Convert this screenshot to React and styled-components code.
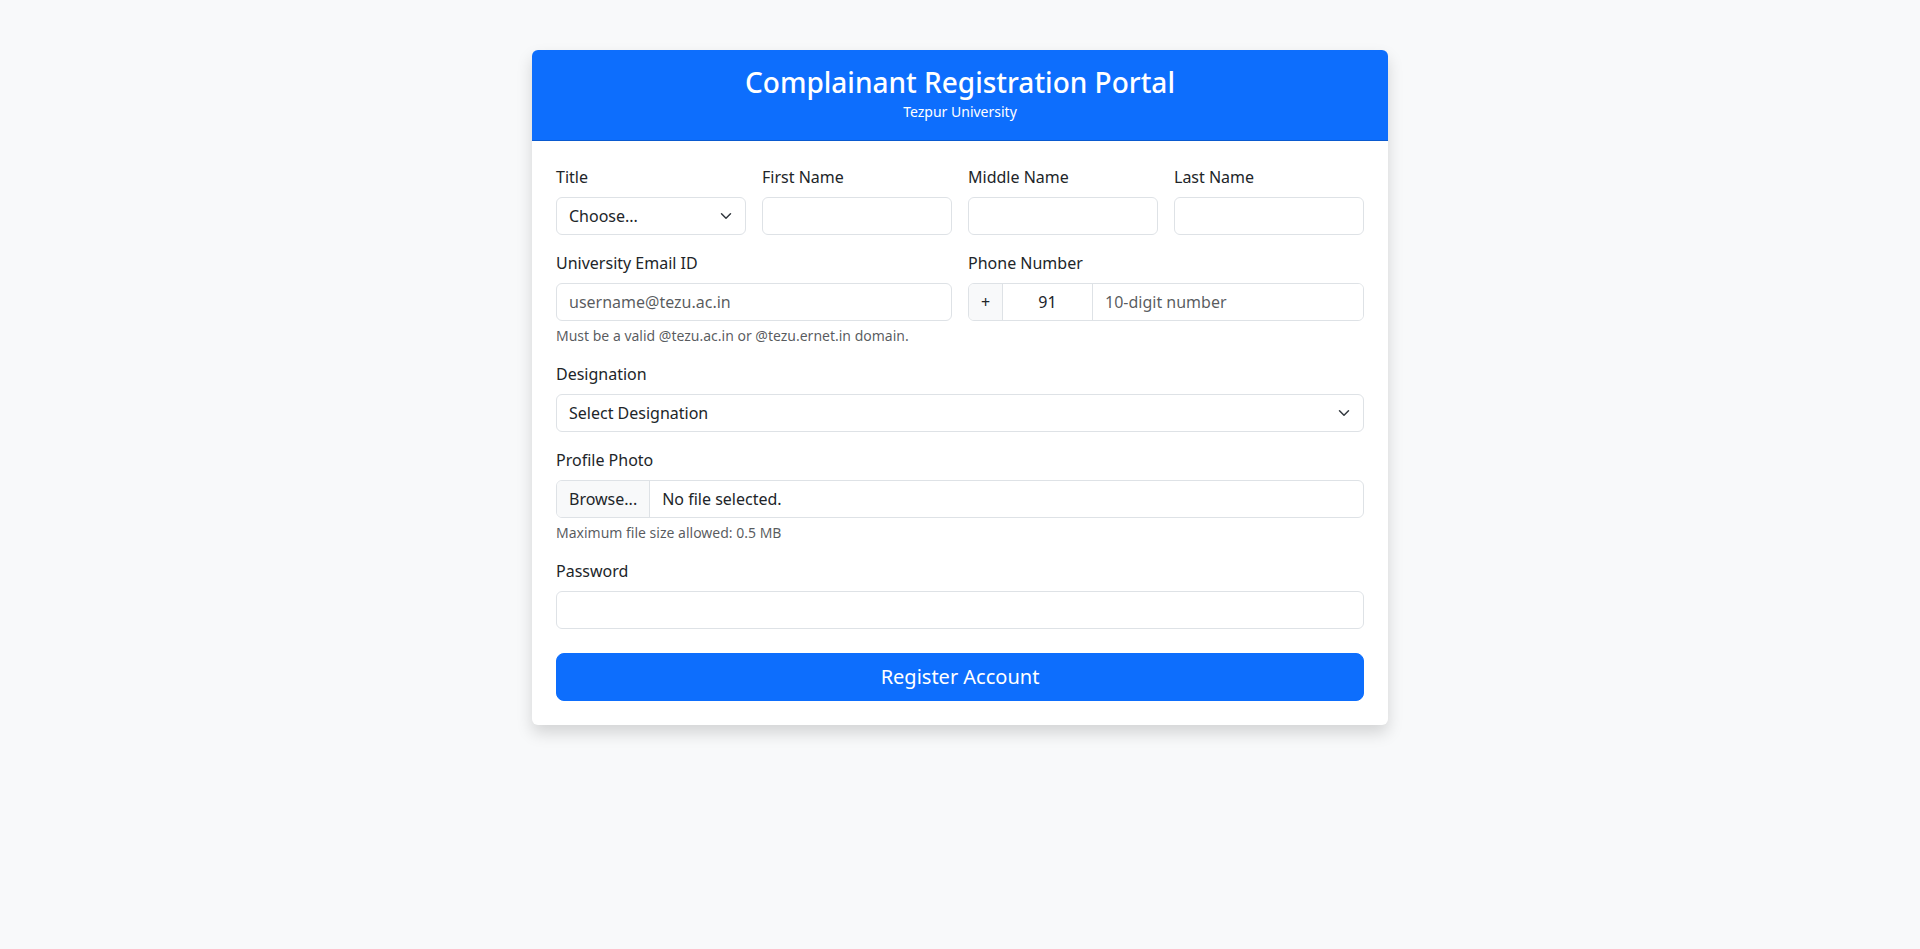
import React from 'react'
import styled, { createGlobalStyle } from 'styled-components'

const GlobalStyle = createGlobalStyle`
    *, *::before, *::after {
        box-sizing: border-box;
    }
    body {
        margin: 0;
        background-color: #f8f9fa;
        color: #212529;
        font-family: "Noto Sans", "Open Sans", sans-serif;
        font-size: 16px;
        line-height: 1.5;
    }
`

const Chevron = () => (
    <svg width="12" height="12" viewBox="0 0 16 16" fill="none">
        <path d="m2 5 6 6 6-6" stroke="#343a40" strokeWidth="2" strokeLinecap="round" strokeLinejoin="round" />
    </svg>
)

export default function App() {
    return (
        <Page>
            <GlobalStyle />
            <Card>
                <CardHeader>
                    <Title>Complainant Registration Portal</Title>
                    <Subtitle>Tezpur University</Subtitle>
                </CardHeader>
                <CardBody>
                    <Row $cols={4}>
                        <Field>
                            <Label>Title</Label>
                            <SelectWrap>
                                <Select defaultValue="">
                                    <option value="">Choose...</option>
                                    <option>Mr.</option>
                                    <option>Ms.</option>
                                    <option>Dr.</option>
                                    <option>Prof.</option>
                                </Select>
                                <Arrow><Chevron /></Arrow>
                            </SelectWrap>
                        </Field>
                        <Field>
                            <Label>First Name</Label>
                            <Input type="text" />
                        </Field>
                        <Field>
                            <Label>Middle Name</Label>
                            <Input type="text" />
                        </Field>
                        <Field>
                            <Label>Last Name</Label>
                            <Input type="text" />
                        </Field>
                    </Row>

                    <Row $cols={2}>
                        <Field>
                            <Label>University Email ID</Label>
                            <Input type="email" placeholder="username@tezu.ac.in" />
                            <Help>Must be a valid @tezu.ac.in or @tezu.ernet.in domain.</Help>
                        </Field>
                        <Field>
                            <Label>Phone Number</Label>
                            <InputGroup>
                                <Addon>+</Addon>
                                <CodeInput type="text" defaultValue="91" />
                                <GroupInput type="tel" placeholder="10-digit number" />
                            </InputGroup>
                        </Field>
                    </Row>

                    <Field>
                        <Label>Designation</Label>
                        <SelectWrap>
                            <Select defaultValue="">
                                <option value="">Select Designation</option>
                                <option>Student</option>
                                <option>Faculty</option>
                                <option>Staff</option>
                            </Select>
                            <Arrow><Chevron /></Arrow>
                        </SelectWrap>
                    </Field>

                    <Field>
                        <Label>Profile Photo</Label>
                        <FileBox>
                            <FileButton>Browse...</FileButton>
                            <FileName>No file selected.</FileName>
                        </FileBox>
                        <Help>Maximum file size allowed: 0.5 MB</Help>
                    </Field>

                    <Field>
                        <Label>Password</Label>
                        <Input type="password" />
                    </Field>

                    <SubmitButton type="button">Register Account</SubmitButton>
                </CardBody>
            </Card>
        </Page>
    )
}

const Page = styled.div`
    min-height: 100vh;
    padding-top: 50px;
    display: flex;
    justify-content: center;
    align-items: flex-start;
`

const Card = styled.div`
    width: 856px;
    background-color: #fff;
    border-radius: 6px;
    box-shadow: 0 8px 16px rgba(0, 0, 0, 0.15);
    overflow: hidden;
`

const CardHeader = styled.div`
    background-color: #0d6efd;
    color: #fff;
    text-align: center;
    padding: 16px;
    border-bottom: 1px solid rgba(0, 0, 0, 0.175);
`

const Title = styled.h3`
    margin: 0;
    font-size: 28px;
    font-weight: 500;
    line-height: 1.2;
`

const Subtitle = styled.p`
    margin: 0;
    font-size: 14px;
    line-height: 24px;
`

const CardBody = styled.div`
    padding: 24px;
    display: flex;
    flex-direction: column;
    gap: 16px;
`

const Row = styled.div`
    display: grid;
    grid-template-columns: repeat(${p => p.$cols}, 1fr);
    gap: 16px;
`

const Field = styled.div`
    display: flex;
    flex-direction: column;
    min-width: 0;
`

const Label = styled.label`
    margin-bottom: 8px;
    font-size: 16px;
    line-height: 24px;
`

const Input = styled.input`
    display: block;
    width: 100%;
    height: 38px;
    padding: 6px 12px;
    font-family: inherit;
    font-size: 16px;
    line-height: 24px;
    color: #212529;
    background-color: #fff;
    border: 1px solid #dee2e6;
    border-radius: 6px;
    outline: none;
    &::placeholder {
        color: rgba(33, 37, 41, 0.75);
    }
`

const SelectWrap = styled.div`
    position: relative;
`

const Select = styled.select`
    display: block;
    width: 100%;
    height: 38px;
    padding: 6px 36px 6px 12px;
    font-family: inherit;
    font-size: 16px;
    line-height: 24px;
    color: #212529;
    background-color: #fff;
    border: 1px solid #dee2e6;
    border-radius: 6px;
    appearance: none;
    outline: none;
`

const Arrow = styled.span`
    position: absolute;
    right: 14px;
    top: 50%;
    transform: translateY(-50%);
    display: flex;
    pointer-events: none;
`

const Help = styled.div`
    margin-top: 4px;
    font-size: 14px;
    line-height: 21px;
    color: rgba(33, 37, 41, 0.75);
`

const InputGroup = styled.div`
    display: flex;
    height: 38px;
    border: 1px solid #dee2e6;
    border-radius: 6px;
    overflow: hidden;
`

const Addon = styled.span`
    display: flex;
    align-items: center;
    justify-content: center;
    width: 34px;
    background-color: #f8f9fa;
    border-right: 1px solid #dee2e6;
    font-size: 16px;
`

const CodeInput = styled.input`
    width: 90px;
    flex: none;
    padding: 6px 12px;
    border: none;
    border-right: 1px solid #dee2e6;
    font-family: inherit;
    font-size: 16px;
    color: #212529;
    text-align: center;
    outline: none;
`

const GroupInput = styled.input`
    flex: 1;
    min-width: 0;
    padding: 6px 12px;
    border: none;
    font-family: inherit;
    font-size: 16px;
    color: #212529;
    outline: none;
    &::placeholder {
        color: rgba(33, 37, 41, 0.75);
    }
`

const FileBox = styled.div`
    display: flex;
    height: 38px;
    border: 1px solid #dee2e6;
    border-radius: 6px;
    overflow: hidden;
    cursor: pointer;
`

const FileButton = styled.span`
    display: flex;
    align-items: center;
    padding: 0 12px;
    background-color: #f8f9fa;
    border-right: 1px solid #dee2e6;
`

const FileName = styled.span`
    display: flex;
    align-items: center;
    padding: 0 12px;
`

const SubmitButton = styled.button`
    margin-top: 8px;
    width: 100%;
    height: 48px;
    padding: 8px 16px;
    font-family: inherit;
    font-size: 20px;
    line-height: 30px;
    color: #fff;
    background-color: #0d6efd;
    border: 1px solid #0d6efd;
    border-radius: 8px;
    cursor: pointer;
`
